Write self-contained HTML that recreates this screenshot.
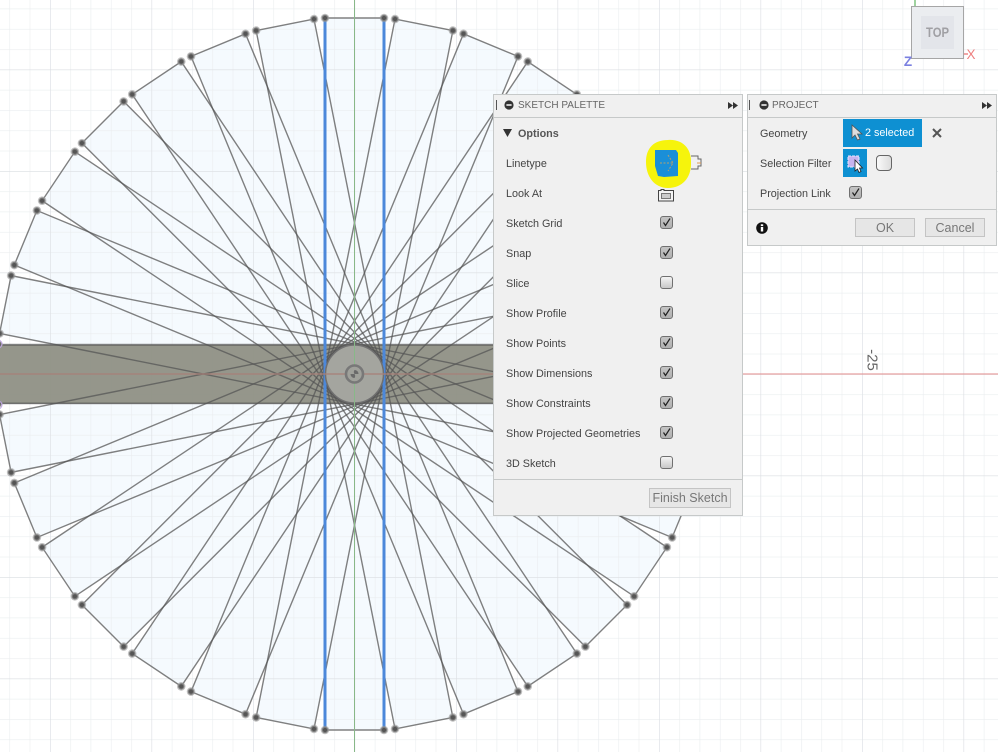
<!DOCTYPE html>
<html><head><meta charset="utf-8"><style>
html,body{margin:0;padding:0;background:#fff}
#r{position:relative;width:998px;height:752px;overflow:hidden;background:#fff;font-family:"Liberation Sans",sans-serif;filter:blur(.25px)}
#r>svg.m{position:absolute;left:0;top:0;filter:blur(.35px)}
.p{position:absolute;background:#f0f0f0;border:1px solid #c6c9c9;box-sizing:border-box}
.t{position:absolute;font-size:10.8px;color:#444;white-space:nowrap;line-height:14px}
.h{position:absolute;font-size:10px;color:#666;white-space:nowrap;line-height:14px}
.c{position:absolute;width:13px;height:13px;box-sizing:border-box;border:1px solid #707070;border-radius:3px;background:linear-gradient(#f4f4f4,#c8c8c8)}
.k{background:linear-gradient(#c4c4c4,#b0b0b0)}
.k svg{position:absolute;left:0;top:0}
.l{position:absolute;height:1px;background:#c6c9c9}
.b{position:absolute;box-sizing:border-box;border:1px solid #c4c4c4;background:#e6e6e6;color:#777;font-size:12.5px;text-align:center}
</style></head><body><div id="r">
<svg class="m" width="998" height="752" viewBox="0 0 998 752">
<defs>
<rect id="f" x="325" y="18" width="59" height="712" fill="#f5fafe"/>
<g id="s" fill="none" stroke="#555" stroke-opacity=".75" stroke-width="1.4">
<rect x="325" y="18" width="59" height="712"/>
</g>
<g id="d" fill="#555" stroke="#999" stroke-opacity=".6" stroke-width="2.2">
<circle cx="325" cy="18" r="3.2"/><circle cx="384" cy="18" r="3.2"/><circle cx="325" cy="730" r="3.2"/><circle cx="384" cy="730" r="3.2"/>
</g>
<pattern id="g1" width="20.3" height="20.3" x="354.5" y="374" patternUnits="userSpaceOnUse"><path d="M0 0V20.3M0 0H20.3" stroke="#eaedef" stroke-width="1.2" fill="none"/></pattern>
<pattern id="g2" width="101.5" height="101.5" x="354.5" y="374" patternUnits="userSpaceOnUse"><path d="M0 0V101.5M0 0H101.5" stroke="#dcdfe3" stroke-width="1.2" fill="none"/></pattern>
</defs>
<g>
<use href="#f"/>
<use href="#f" transform="rotate(11.25 354.5 374)"/><use href="#f" transform="rotate(22.5 354.5 374)"/><use href="#f" transform="rotate(33.75 354.5 374)"/>
<use href="#f" transform="rotate(45 354.5 374)"/><use href="#f" transform="rotate(56.25 354.5 374)"/><use href="#f" transform="rotate(67.5 354.5 374)"/>
<use href="#f" transform="rotate(78.75 354.5 374)"/><use href="#f" transform="rotate(90 354.5 374)"/><use href="#f" transform="rotate(101.25 354.5 374)"/>
<use href="#f" transform="rotate(112.5 354.5 374)"/><use href="#f" transform="rotate(123.75 354.5 374)"/><use href="#f" transform="rotate(135 354.5 374)"/>
<use href="#f" transform="rotate(146.25 354.5 374)"/><use href="#f" transform="rotate(157.5 354.5 374)"/><use href="#f" transform="rotate(168.75 354.5 374)"/>
</g>
<rect width="998" height="752" fill="url(#g1)"/>
<rect width="998" height="752" fill="url(#g2)"/>
<rect x="0" y="345" width="495" height="58" fill="#8f9085" fill-opacity=".95"/>
<path d="M0 345.5H495M0 403H495" stroke="#777870" stroke-width="1"/>
<g>
<use href="#s" transform="rotate(11.25 354.5 374)"/><use href="#s" transform="rotate(22.5 354.5 374)"/><use href="#s" transform="rotate(33.75 354.5 374)"/>
<use href="#s" transform="rotate(45 354.5 374)"/><use href="#s" transform="rotate(56.25 354.5 374)"/><use href="#s" transform="rotate(67.5 354.5 374)"/>
<use href="#s" transform="rotate(78.75 354.5 374)"/><use href="#s" transform="rotate(90 354.5 374)"/><use href="#s" transform="rotate(101.25 354.5 374)"/>
<use href="#s" transform="rotate(112.5 354.5 374)"/><use href="#s" transform="rotate(123.75 354.5 374)"/><use href="#s" transform="rotate(135 354.5 374)"/>
<use href="#s" transform="rotate(146.25 354.5 374)"/><use href="#s" transform="rotate(157.5 354.5 374)"/><use href="#s" transform="rotate(168.75 354.5 374)"/>
</g>
<path d="M325 18H384M325 730H384" stroke="#808080" stroke-width="1.4"/>
<path d="M325 18V730M384 18V730" stroke="#4c88da" stroke-width="3"/>
<circle cx="354.5" cy="374" r="29" fill="#a4a59f" stroke="#707070" stroke-width="1.5"/>
<path d="M354.5 0V752" stroke="#88b888" stroke-width="1"/>
<path d="M0 374H495" stroke="#a87f78" stroke-width="1.2"/>
<path d="M742 374H998" stroke="#e08a8a" stroke-width="1"/>
<circle cx="354.5" cy="374" r="8.5" fill="#a0a19b" stroke="#787878" stroke-width="2.6"/>
<path d="M354.5 374a3.5 3.5 0 0 1 0 -4a4 4 0 0 1 4 4z" fill="#6a6a6a"/>
<path d="M354.5 374a3.5 3.5 0 0 1 0 4a4 4 0 0 1 -4 -4z" fill="#6a6a6a"/>
<g>
<use href="#d"/>
<use href="#d" transform="rotate(11.25 354.5 374)"/><use href="#d" transform="rotate(22.5 354.5 374)"/><use href="#d" transform="rotate(33.75 354.5 374)"/>
<use href="#d" transform="rotate(45 354.5 374)"/><use href="#d" transform="rotate(56.25 354.5 374)"/><use href="#d" transform="rotate(67.5 354.5 374)"/>
<use href="#d" transform="rotate(78.75 354.5 374)"/><use href="#d" transform="rotate(90 354.5 374)"/><use href="#d" transform="rotate(101.25 354.5 374)"/>
<use href="#d" transform="rotate(112.5 354.5 374)"/><use href="#d" transform="rotate(123.75 354.5 374)"/><use href="#d" transform="rotate(135 354.5 374)"/>
<use href="#d" transform="rotate(146.25 354.5 374)"/><use href="#d" transform="rotate(157.5 354.5 374)"/><use href="#d" transform="rotate(168.75 354.5 374)"/>
</g>
<g fill="none" stroke="#c4a8e8" stroke-width="1"><circle cx="-2" cy="344" r="4"/><circle cx="-2" cy="405" r="4"/></g>
<path d="M915 0V6" stroke="#9fd29f" stroke-width="2"/>
<path d="M964 54H968" stroke="#e88" stroke-width="1.5"/>
<text x="872" y="360" transform="rotate(90 872 360)" text-anchor="middle" dominant-baseline="central" font-family="Liberation Sans" font-size="15" fill="#666">-25</text>
<rect x="911.5" y="6.5" width="52" height="52" fill="#ebedf0" stroke="#a6a6a6"/>
<rect x="921" y="16" width="33" height="33" fill="#e3e5ea"/>
<text x="937.5" y="37" text-anchor="middle" font-family="Liberation Sans" font-weight="bold" font-size="14" fill="#a0a0a4" textLength="23" lengthAdjust="spacingAndGlyphs">TOP</text>
<text x="971" y="59" text-anchor="middle" font-family="Liberation Sans" font-size="13.5" fill="#ee8080">X</text>
<text x="908" y="66" text-anchor="middle" font-family="Liberation Sans" font-weight="bold" font-size="13.5" fill="#7a80e0">Z</text>
</svg>

<div class="p" style="left:493px;top:94px;width:250px;height:422px"></div>
<div class="l" style="left:494px;top:117px;width:248px"></div>
<div class="l" style="left:494px;top:479px;width:248px"></div>
<div style="position:absolute;left:496px;top:100px;width:1px;height:10px;background:#555"></div>
<svg style="position:absolute;left:504px;top:100px" width="10" height="10"><circle cx="5" cy="5" r="4.6" fill="#333"/><rect x="2.4" y="4.2" width="5.2" height="1.6" fill="#eee"/></svg>
<div class="h" style="left:518px;top:99px">SKETCH PALETTE</div>
<svg style="position:absolute;left:728px;top:102px" width="10" height="7"><path d="M0 0L5 3.5L0 7zM5 0L10 3.5L5 7z" fill="#333"/></svg>
<svg style="position:absolute;left:503px;top:129px" width="10" height="8"><path d="M0 0H9L4.5 8z" fill="#333"/></svg>
<div class="t" style="left:518px;top:127px;font-weight:bold;color:#555">Options</div>
<div class="t" style="left:506px;top:157px">Linetype</div>
<div class="t" style="left:506px;top:187px">Look At</div>
<div class="t" style="left:506px;top:217px">Sketch Grid</div>
<div class="t" style="left:506px;top:247px">Snap</div>
<div class="t" style="left:506px;top:277px">Slice</div>
<div class="t" style="left:506px;top:307px">Show Profile</div>
<div class="t" style="left:506px;top:337px">Show Points</div>
<div class="t" style="left:506px;top:367px">Show Dimensions</div>
<div class="t" style="left:506px;top:397px">Show Constraints</div>
<div class="t" style="left:506px;top:427px">Show Projected Geometries</div>
<div class="t" style="left:506px;top:457px">3D Sketch</div>

<svg style="position:absolute;left:640px;top:132px" width="70" height="66">
<path d="M6 30C6 16 14 8 28 8C44 7 52 18 51 32C51 46 42 56 28 56C14 56 6 44 6 30Z" fill="#f6f40c"/>
<path d="M15 18H36L38 21V44L24 45L18 44L15 34Z" fill="#1a8fd8"/>
<path d="M20 31H33M28 23L33 31L28 39" stroke="#b0a070" stroke-width="1" fill="none" stroke-dasharray="2 1.5"/>
<path d="M51 24H58V27H61V34H58V37H51" stroke="#666" stroke-width="1" fill="none"/>
<path d="M57 31H61" stroke="#e09a50" stroke-width="1"/>
</svg>
<svg style="position:absolute;left:658px;top:188px" width="17" height="14"><path d="M.5 13V2.5H3V1.5H6V2.5H15.500V13Z" fill="#f4f4f4" stroke="#444"/><rect x="3.5" y="5.5" width="9" height="5" fill="#ccc" stroke="#777"/></svg>
<div class="c k" style="left:660px;top:216px"><svg width="11" height="11"><path d="M2.5 5.5L4.5 8.5L9 1.5" stroke="#222" stroke-width="1.2" fill="none"/></svg></div>
<div class="c k" style="left:660px;top:246px"><svg width="11" height="11"><path d="M2.5 5.5L4.5 8.5L9 1.5" stroke="#222" stroke-width="1.2" fill="none"/></svg></div>
<div class="c" style="left:660px;top:276px"></div>
<div class="c k" style="left:660px;top:306px"><svg width="11" height="11"><path d="M2.5 5.5L4.5 8.5L9 1.5" stroke="#222" stroke-width="1.2" fill="none"/></svg></div>
<div class="c k" style="left:660px;top:336px"><svg width="11" height="11"><path d="M2.5 5.5L4.5 8.5L9 1.5" stroke="#222" stroke-width="1.2" fill="none"/></svg></div>
<div class="c k" style="left:660px;top:366px"><svg width="11" height="11"><path d="M2.5 5.5L4.5 8.5L9 1.5" stroke="#222" stroke-width="1.2" fill="none"/></svg></div>
<div class="c k" style="left:660px;top:396px"><svg width="11" height="11"><path d="M2.5 5.5L4.5 8.5L9 1.5" stroke="#222" stroke-width="1.2" fill="none"/></svg></div>
<div class="c k" style="left:660px;top:426px"><svg width="11" height="11"><path d="M2.5 5.5L4.5 8.5L9 1.5" stroke="#222" stroke-width="1.2" fill="none"/></svg></div>
<div class="c" style="left:660px;top:456px"></div>
<div class="b" style="left:649px;top:488px;width:82px;height:20px;line-height:19px">Finish Sketch</div>

<div class="p" style="left:747px;top:94px;width:250px;height:152px"></div>
<div class="l" style="left:748px;top:117px;width:248px"></div>
<div class="l" style="left:748px;top:209px;width:248px"></div>
<div style="position:absolute;left:749px;top:100px;width:1px;height:10px;background:#555"></div>
<svg style="position:absolute;left:759px;top:100px" width="10" height="10"><circle cx="5" cy="5" r="4.6" fill="#333"/><rect x="2.4" y="4.2" width="5.2" height="1.6" fill="#eee"/></svg>
<div class="h" style="left:772px;top:99px">PROJECT</div>
<svg style="position:absolute;left:982px;top:102px" width="10" height="7"><path d="M0 0L5 3.5L0 7zM5 0L10 3.5L5 7z" fill="#333"/></svg>
<div class="t" style="left:760px;top:127px">Geometry</div>
<div class="t" style="left:760px;top:157px">Selection Filter</div>
<div class="t" style="left:760px;top:187px">Projection Link</div>
<div style="position:absolute;left:843px;top:119px;width:79px;height:28px;background:#0e90d2;color:#fff;font-size:10.8px;line-height:28px;text-indent:22px;white-space:nowrap">2 selected</div>
<svg style="position:absolute;left:850px;top:124px" width="14" height="18"><path d="M2 1V14L5 11L7.5 16L10 15L7.5 10H12Z" fill="#ddd" stroke="#555" stroke-width=".8"/></svg>
<svg style="position:absolute;left:932px;top:128px" width="10" height="10"><path d="M1 1L9 9M9 1L1 9" stroke="#555" stroke-width="2"/></svg>
<div style="position:absolute;left:843px;top:149px;width:24px;height:28px;background:#0e90d2"></div>
<svg style="position:absolute;left:846px;top:154px" width="20" height="20"><rect x="2" y="2" width="11" height="11" fill="#c6b4f0" stroke="#e8e8ff" stroke-width="1" stroke-dasharray="3 1"/><path d="M9 6V17L11.5 15L13 18.5L15 17.5L13.5 14H16.5Z" fill="#fff" stroke="#222" stroke-width=".8"/></svg>
<div style="position:absolute;left:876px;top:155px;width:16px;height:16px;box-sizing:border-box;border:1px solid #666;border-radius:4px;background:linear-gradient(90deg,#fafafa,#ddd)"></div>
<div class="c k" style="left:849px;top:186px"><svg width="11" height="11"><path d="M2.5 5.5L4.5 8.5L9 1.5" stroke="#222" stroke-width="1.2" fill="none"/></svg></div>
<svg style="position:absolute;left:756px;top:222px" width="12" height="12"><circle cx="6" cy="6" r="5.8" fill="#111"/><rect x="4.8" y="5" width="2.4" height="4.5" fill="#fff"/><rect x="4.8" y="2.3" width="2.4" height="1.8" fill="#fff"/></svg>
<div class="b" style="left:855px;top:218px;width:60px;height:19px;line-height:18px">OK</div>
<div class="b" style="left:925px;top:218px;width:60px;height:19px;line-height:18px">Cancel</div>
</div></body></html>
